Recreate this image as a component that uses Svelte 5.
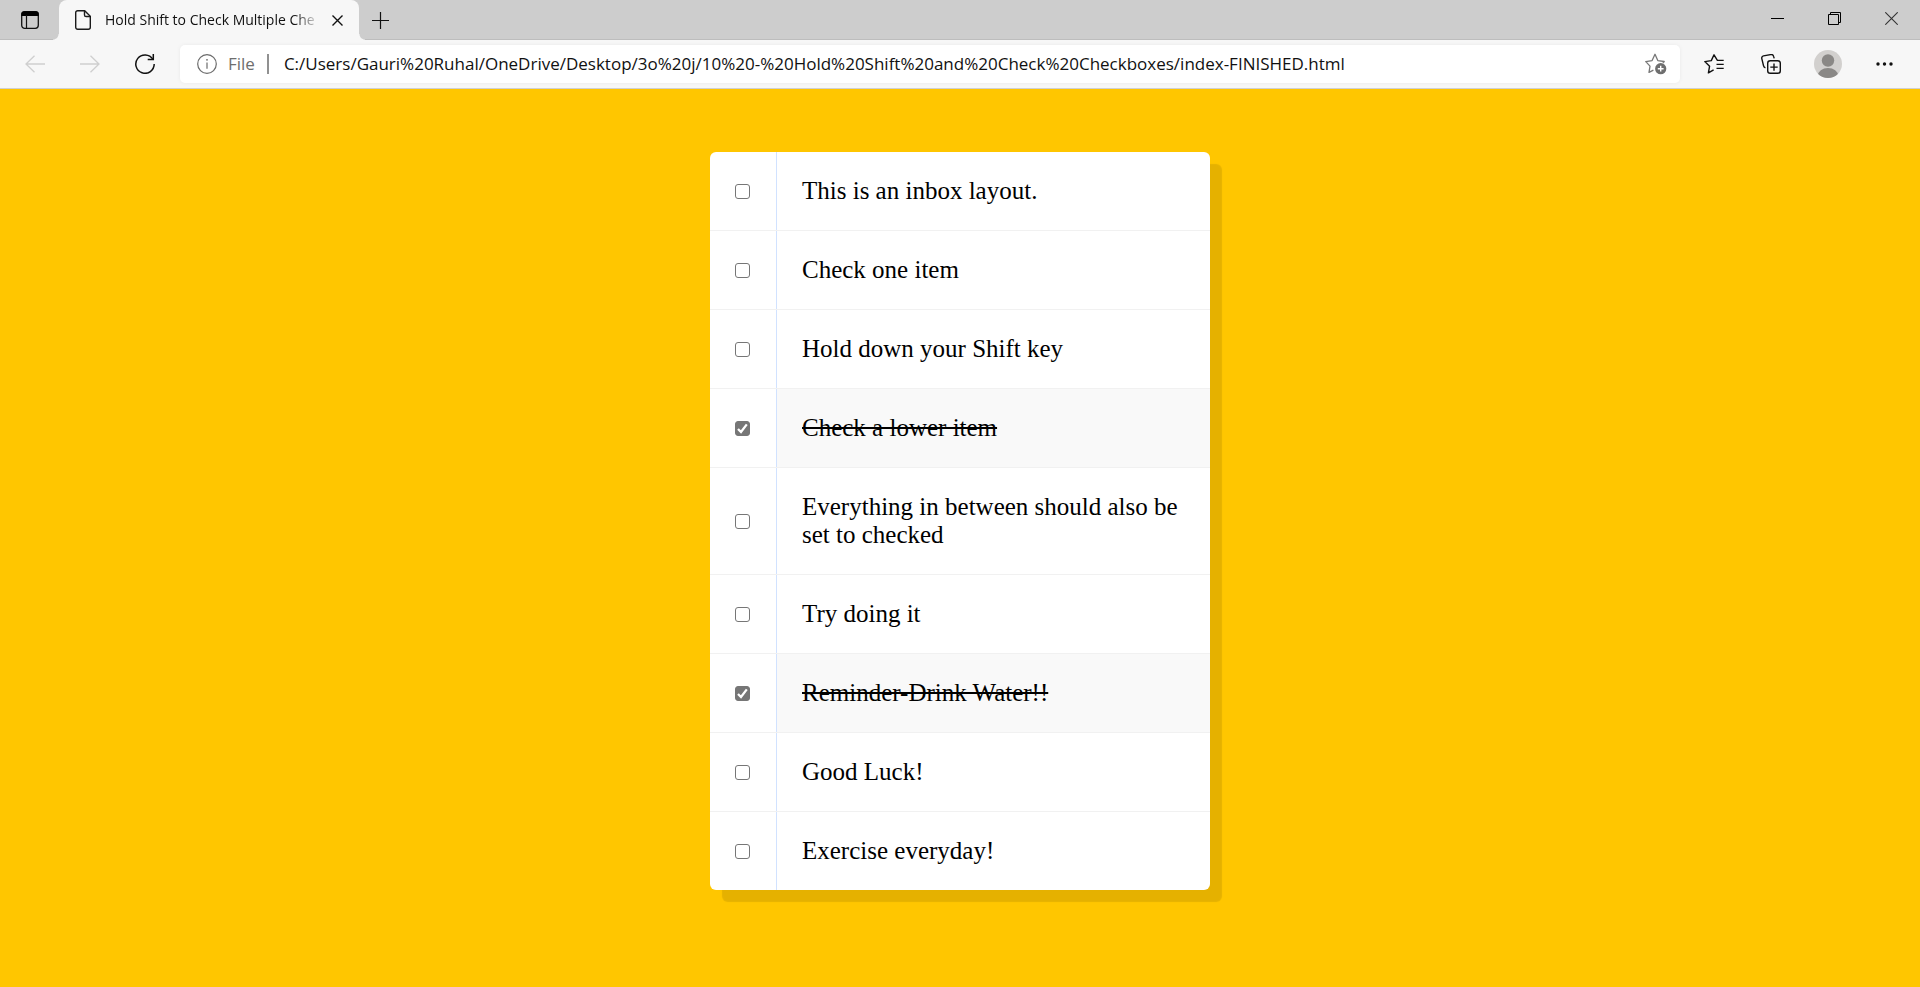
<script>
  let address = $state(
    'C:/Users/Gauri%20Ruhal/OneDrive/Desktop/3o%20j/10%20-%20Hold%20Shift%20and%20Check%20Checkboxes/index-FINISHED.html'
  );

  let items = $state([
    { text: 'This is an inbox layout.', done: false },
    { text: 'Check one item', done: false },
    { text: 'Hold down your Shift key', done: false },
    { text: 'Check a lower item', done: true },
    { text: 'Everything in between should also be set to checked', done: false },
    { text: 'Try doing it', done: false },
    { text: 'Reminder-Drink Water!!', done: true },
    { text: 'Good Luck!', done: false },
    { text: 'Exercise everyday!', done: false }
  ]);

  let last = -1;

  // Holding Shift checks every item between the previous click and this one.
  function pick(event, index) {
    if (event.shiftKey && event.currentTarget.checked && last >= 0) {
      const from = Math.min(last, index);
      const to = Math.max(last, index);
      for (let i = from; i <= to; i++) items[i].done = true;
    }
    last = index;
  }
</script>

<div class="browser">
  <header class="titlebar">
    <button class="tab-menu" aria-label="Tab actions">
      <svg width="18" height="18" viewBox="0 0 18 18">
        <rect x="0.7" y="0.7" width="16.6" height="16.6" rx="3" fill="none" stroke="#111" stroke-width="1.3" />
        <path d="M0.3 5V3.5A3 3 0 0 1 3.3 0.3h11.4a3 3 0 0 1 3 3.2V5z" fill="#000" />
        <path d="M5.5 4v13" stroke="#111" stroke-width="1.2" />
      </svg>
    </button>
    <div class="tab">
      <svg width="16" height="20" viewBox="0 0 16 20" fill="none" stroke="#1a1a1a" stroke-width="1.4">
        <path d="M2.7 0.7h7l5.6 5.6v11a2 2 0 0 1-2 2H2.7a2 2 0 0 1-2-2V2.7a2 2 0 0 1 2-2z" />
        <path d="M9.5 0.9v4a1.6 1.6 0 0 0 1.6 1.6h4" />
      </svg>
      <span class="tab-title">Hold Shift to Check Multiple Che</span>
      <button class="tab-close" aria-label="Close tab">
        <svg width="11" height="11" viewBox="0 0 11 11" stroke="#111" stroke-width="1.4">
          <path d="M0.5 0.5l10 10M10.5 0.5l-10 10" />
        </svg>
      </button>
    </div>
    <button class="new-tab" aria-label="New tab">
      <svg width="17" height="17" viewBox="0 0 17 17" stroke="#111" stroke-width="1.2">
        <path d="M8.5 0v17M0 8.5h17" />
      </svg>
    </button>
    <div class="window-buttons">
      <button aria-label="Minimize">
        <svg width="13" height="13" viewBox="0 0 13 13" stroke="#000"><path d="M0 6.5h13" /></svg>
      </button>
      <button aria-label="Restore">
        <svg width="13" height="13" viewBox="0 0 13 13" fill="none" stroke="#000">
          <path d="M0.5 2.5h10v10h-10zM2.5 2V0.5h10v10H11" />
        </svg>
      </button>
      <button aria-label="Close window">
        <svg width="13" height="13" viewBox="0 0 13 13" stroke="#333" stroke-width="1.1">
          <path d="M0.3 0.3l12.4 12.4M12.7 0.3L0.3 12.7" />
        </svg>
      </button>
    </div>
  </header>

  <nav class="toolbar">
    <button aria-label="Back" disabled>
      <svg width="20" height="18" viewBox="0 0 20 18" fill="none" stroke="#cfcfcf" stroke-width="1.3">
        <path d="M20 9H1M9.5 0.7L1 9l8.5 8.3" />
      </svg>
    </button>
    <button aria-label="Forward" disabled>
      <svg width="20" height="18" viewBox="0 0 20 18" fill="none" stroke="#cfcfcf" stroke-width="1.3">
        <path d="M0 9h19M10.5 0.7L19 9l-8.5 8.3" />
      </svg>
    </button>
    <button aria-label="Refresh">
      <svg width="20" height="20" viewBox="0 0 20 20" fill="none" stroke="#111" stroke-width="1.5">
        <path d="M17.8 5.2A9.2 9.2 0 1 0 19.2 10" />
        <path d="M18.3 0v5.6h-5.6" />
      </svg>
    </button>

    <div class="address">
      <svg width="20" height="20" viewBox="0 0 20 20" fill="none" stroke="#6b6b6b" stroke-width="1.2">
        <circle cx="10" cy="10" r="9.3" />
        <path d="M10 8.5v6.3" />
        <circle cx="10" cy="5.8" r="0.9" fill="#6b6b6b" stroke="none" />
      </svg>
      <label for="url">File</label>
      <span class="divider"></span>
      <input id="url" type="text" bind:value={address} />
      <button class="add-star" aria-label="Add this page to favorites">
        <svg width="22" height="22" viewBox="0 0 22 22" fill="none" stroke="#777" stroke-width="1.3" stroke-linejoin="round">
          <path d="M8.4 17.1L4 19.4l1-6.3L0.8 8.6l6.3-1L10 1.3l2.8 6.3 6.4 0.9-1.3 1.6" />
          <circle cx="15.7" cy="15.7" r="5.6" fill="#6e6e6e" stroke="none" />
          <path d="M15.7 12.8v5.8M12.8 15.7h5.8" stroke="#fff" stroke-width="1.4" />
        </svg>
      </button>
    </div>

    <div class="actions">
      <button aria-label="Favorites">
        <svg width="20" height="20" viewBox="0 0 20 20" fill="none" stroke="#111" stroke-width="1.4" stroke-linejoin="round">
          <path d="M19.7 6.4h-6.3L10 0.8 7.3 6.6l-6.5 1 4.8 4.6-1.2 6.7 5.2-3" />
          <path d="M12.5 10.4h7.2M12.5 14.4h7.2" />
        </svg>
      </button>
      <button aria-label="Collections">
        <svg width="20" height="20" viewBox="0 0 20 20" fill="none" stroke="#111" stroke-width="1.4">
          <rect x="6.7" y="6.7" width="12.6" height="12.6" rx="2.6" />
          <path d="M13 9.4v7.4M9.3 13.1h7.4" />
          <path d="M4.4 13.8a2.7 2.7 0 0 1-1.9-2.1L0.8 4.6a2.2 2.2 0 0 1 1.7-2.7l7.2-1.3a2.5 2.5 0 0 1 2.9 1.8l0.6 2" />
        </svg>
      </button>
      <button aria-label="Profile">
        <svg width="28" height="28" viewBox="0 0 28 28">
          <clipPath id="avatar"><circle cx="14" cy="14" r="14" /></clipPath>
          <g clip-path="url(#avatar)">
            <rect width="28" height="28" fill="#d2d0ce" />
            <circle cx="14" cy="10.5" r="6.2" fill="#8a8886" />
            <ellipse cx="14" cy="26" rx="10.2" ry="8" fill="#8a8886" />
          </g>
        </svg>
      </button>
      <button aria-label="Settings and more">
        <svg width="17" height="4" viewBox="0 0 17 4" fill="#111">
          <circle cx="2" cy="2" r="1.7" /><circle cx="8.5" cy="2" r="1.7" /><circle cx="15" cy="2" r="1.7" />
        </svg>
      </button>
    </div>
  </nav>

  <main>
    <div class="inbox">
      {#each items as item, i}
        <div class="item">
          <input id="item-{i}" type="checkbox" bind:checked={item.done} onclick={(e) => pick(e, i)} />
          <label for="item-{i}">{item.text}</label>
        </div>
      {/each}
    </div>
  </main>
</div>

<style>
  :global(html),
  :global(body) {
    margin: 0;
    background: #ffc600;
  }

  .browser {
    font-family: 'Open Sans', 'Noto Sans', sans-serif;
    color: #111;
  }

  button {
    display: flex;
    align-items: center;
    justify-content: center;
    flex: none;
    padding: 0;
    border: 0;
    background: none;
  }

  svg {
    display: block;
    flex: none;
  }

  .titlebar {
    display: flex;
    height: 40px;
    background: #cdcdcd;
    box-shadow: inset 0 -1px #bdbdbd;
  }

  .tab-menu {
    width: 59px;
  }

  .tab {
    position: relative;
    display: flex;
    align-items: center;
    width: 300px;
    box-sizing: border-box;
    padding: 0 16px;
    border-radius: 8px 8px 0 0;
    background: #f7f7f7;
  }

  /* flared feet of the active tab */
  .tab::before,
  .tab::after {
    content: '';
    position: absolute;
    bottom: 0;
    width: 6px;
    height: 6px;
  }

  .tab::before {
    right: 100%;
    background: radial-gradient(circle at 0 0, transparent 5px, #f7f7f7 6px);
  }

  .tab::after {
    left: 100%;
    background: radial-gradient(circle at 100% 0, transparent 5px, #f7f7f7 6px);
  }

  .tab-title {
    flex: 1;
    margin: 0 12px 0 14px;
    overflow: hidden;
    white-space: nowrap;
    font-size: 14px;
    line-height: 20px;
    mask-image: linear-gradient(to right, #000 88%, transparent);
  }

  .new-tab {
    width: 43px;
  }

  .window-buttons {
    display: flex;
    margin-left: auto;
    padding-bottom: 3px;
  }

  .window-buttons button {
    width: 57px;
  }

  .toolbar {
    display: flex;
    align-items: center;
    height: 48px;
    padding: 0 7px;
    border-bottom: 1px solid #d0d0d0;
    background: #f7f7f7;
  }

  .toolbar > button {
    width: 55px;
    height: 38px;
  }

  .address {
    display: flex;
    flex: 1;
    align-items: center;
    min-width: 0;
    height: 38px;
    box-sizing: border-box;
    margin: 0 5px 0 8px;
    padding: 0 13px 0 17px;
    border-radius: 5px;
    background: #fff;
    box-shadow: 0 0 4px rgba(0, 0, 0, 0.06);
    font-size: 17px;
    line-height: 24px;
  }

  .address label {
    margin: 0 12px 0 11px;
    color: #6e6e6e;
  }

  .divider {
    width: 2px;
    height: 20px;
    background: #919191;
  }

  .address input {
    flex: 1;
    min-width: 0;
    margin: 0 16px 0 15px;
    padding: 0;
    border: 0;
    outline: 0;
    background: none;
    color: #111;
    font: inherit;
  }

  .actions {
    display: flex;
  }

  .actions button {
    width: 57px;
    height: 38px;
  }

  main {
    padding: 63px 20px;
    font-family: 'Liberation Serif', 'Times New Roman', serif;
    font-size: 25px;
    line-height: 28px;
    color: #000;
  }

  .inbox {
    max-width: 500px;
    margin: 0 auto;
    border-radius: 6px;
    background: #fff;
    box-shadow: 12px 12px 1px rgba(0, 0, 0, 0.1);
    overflow-wrap: anywhere;
  }

  .item {
    display: flex;
    align-items: center;
    border-bottom: 1px solid #f1f1f1;
  }

  .item:last-child {
    border-bottom: 0;
  }

  .item input {
    appearance: none;
    flex: none;
    width: 15px;
    height: 15px;
    margin: 0 26px 0 25px;
    border: 1px solid #767676;
    border-radius: 3px;
    background: #fff;
  }

  .item input:checked {
    background: #767676
      url("data:image/svg+xml,%3Csvg xmlns='http://www.w3.org/2000/svg' viewBox='0 0 13 13'%3E%3Cpath d='M2 7l3 3 5.8-7.6' fill='none' stroke='white' stroke-width='2.3'/%3E%3C/svg%3E")
      center / 13px 13px no-repeat;
  }

  .item label {
    flex: 1;
    padding: 25px;
    border-left: 1px solid #d1e2ff;
  }

  .item input:checked + label {
    background: #f9f9f9;
    text-decoration: line-through;
  }
</style>
